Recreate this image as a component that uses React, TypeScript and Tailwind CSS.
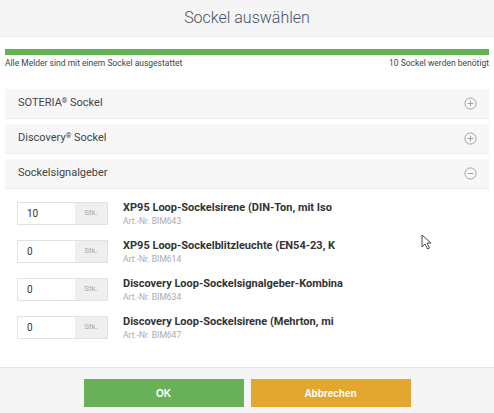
import { useState } from "react";

const items = [
  { qty: "10", name: "XP95 Loop-Sockelsirene (DIN-Ton, mit Iso", art: "BIM643" },
  { qty: "0", name: "XP95 Loop-Sockelblitzleuchte (EN54-23, K", art: "BIM614" },
  { qty: "0", name: "Discovery Loop-Sockelsignalgeber-Kombina", art: "BIM634" },
  { qty: "0", name: "Discovery Loop-Sockelsirene (Mehrton, mi", art: "BIM647" },
];

function CircleIcon({ open }: { open?: boolean }) {
  return (
    <svg width="13" height="13" viewBox="0 0 14 14" fill="none" stroke="#9a9a9a" strokeWidth="1">
      <circle cx="7" cy="7" r="6" />
      <path d="M4 7h6" />
      {!open && <path d="M7 4v6" />}
    </svg>
  );
}

function Panel({ title, sup, open }: { title: string; sup?: boolean; open?: boolean }) {
  return (
    <div className="flex h-[30px] items-center justify-between border-b border-[#ececec] bg-[#f7f7f7] pl-[13px] pr-[12px] text-[11px] text-[#444]">
      <span>
        {title}
        {sup && <sup className="text-[7px]">®</sup>}
        {sup && " Sockel"}
      </span>
      <CircleIcon open={open} />
    </div>
  );
}

export default function App() {
  const [qty, setQty] = useState(items.map((i) => i.qty));

  return (
    <div className="relative flex h-[413px] w-[494px] flex-col overflow-hidden bg-white font-['Roboto',sans-serif]">
      <div className="flex h-[37px] shrink-0 items-center justify-center border-b border-[#e8e8e8] bg-[#f5f5f5]">
        <h1 className="text-[16px] font-light text-[#4a5165]">Sockel auswählen</h1>
      </div>

      <div className="flex-1 px-[5px] pt-[12px]">
        <div className="h-[6px] bg-[#62b352]" />
        <div className="mt-[2px] flex justify-between text-[8.5px] text-[#444]">
          <span>Alle Melder sind mit einem Sockel ausgestattet</span>
          <span>10 Sockel werden benötigt</span>
        </div>

        <div className="mt-[19px] flex flex-col gap-[5px]">
          <Panel title="SOTERIA" sup />
          <Panel title="Discovery" sup />
          <Panel title="Sockelsignalgeber" open />
        </div>

        <div className="mt-[13px] flex flex-col gap-[15px] pl-[12px]">
          {items.map((it, i) => (
            <div key={it.art} className="flex h-[23px] items-start">
              <div className="flex h-[23px] w-[91px] border border-[#e2e2e2]">
                <input
                  value={qty[i]}
                  onChange={(e) => setQty(qty.map((q, j) => (j === i ? e.target.value : q)))}
                  className="w-[57px] bg-white pl-[9px] text-[10px] text-[#333] outline-none"
                />
                <span className="flex flex-1 items-center justify-center bg-[#efefef] text-[8px] text-[#aaa]">
                  Stk.
                </span>
              </div>
              <div className="ml-[15px] -mt-[1px]">
                <div className="whitespace-nowrap text-[11px] font-bold leading-[13px] text-[#333]">{it.name}</div>
                <div className="mt-[1px] text-[8.5px] text-[#aaa]">Art.-Nr. {it.art}</div>
              </div>
            </div>
          ))}
        </div>
      </div>

      <div className="flex h-[46px] shrink-0 justify-center gap-[7px] border-t border-[#e4e4e4] bg-[#f5f5f5] pt-[11px]">
        <button className="h-[28px] w-[160px] bg-[#69b158] font-['Liberation_Sans',sans-serif] text-[10px] font-bold text-white">
          OK
        </button>
        <button className="h-[28px] w-[160px] bg-[#e3a72f] font-['Liberation_Sans',sans-serif] text-[10px] font-bold text-white">
          Abbrechen
        </button>
      </div>

      <svg className="absolute left-[421px] top-[234px]" width="12" height="16" viewBox="0 0 12 16">
        <path d="M1 1v12l3-3 2.5 5 2-1-2.5-5h4z" fill="white" stroke="#333" strokeWidth="0.9" strokeLinejoin="round" />
      </svg>
    </div>
  );
}
